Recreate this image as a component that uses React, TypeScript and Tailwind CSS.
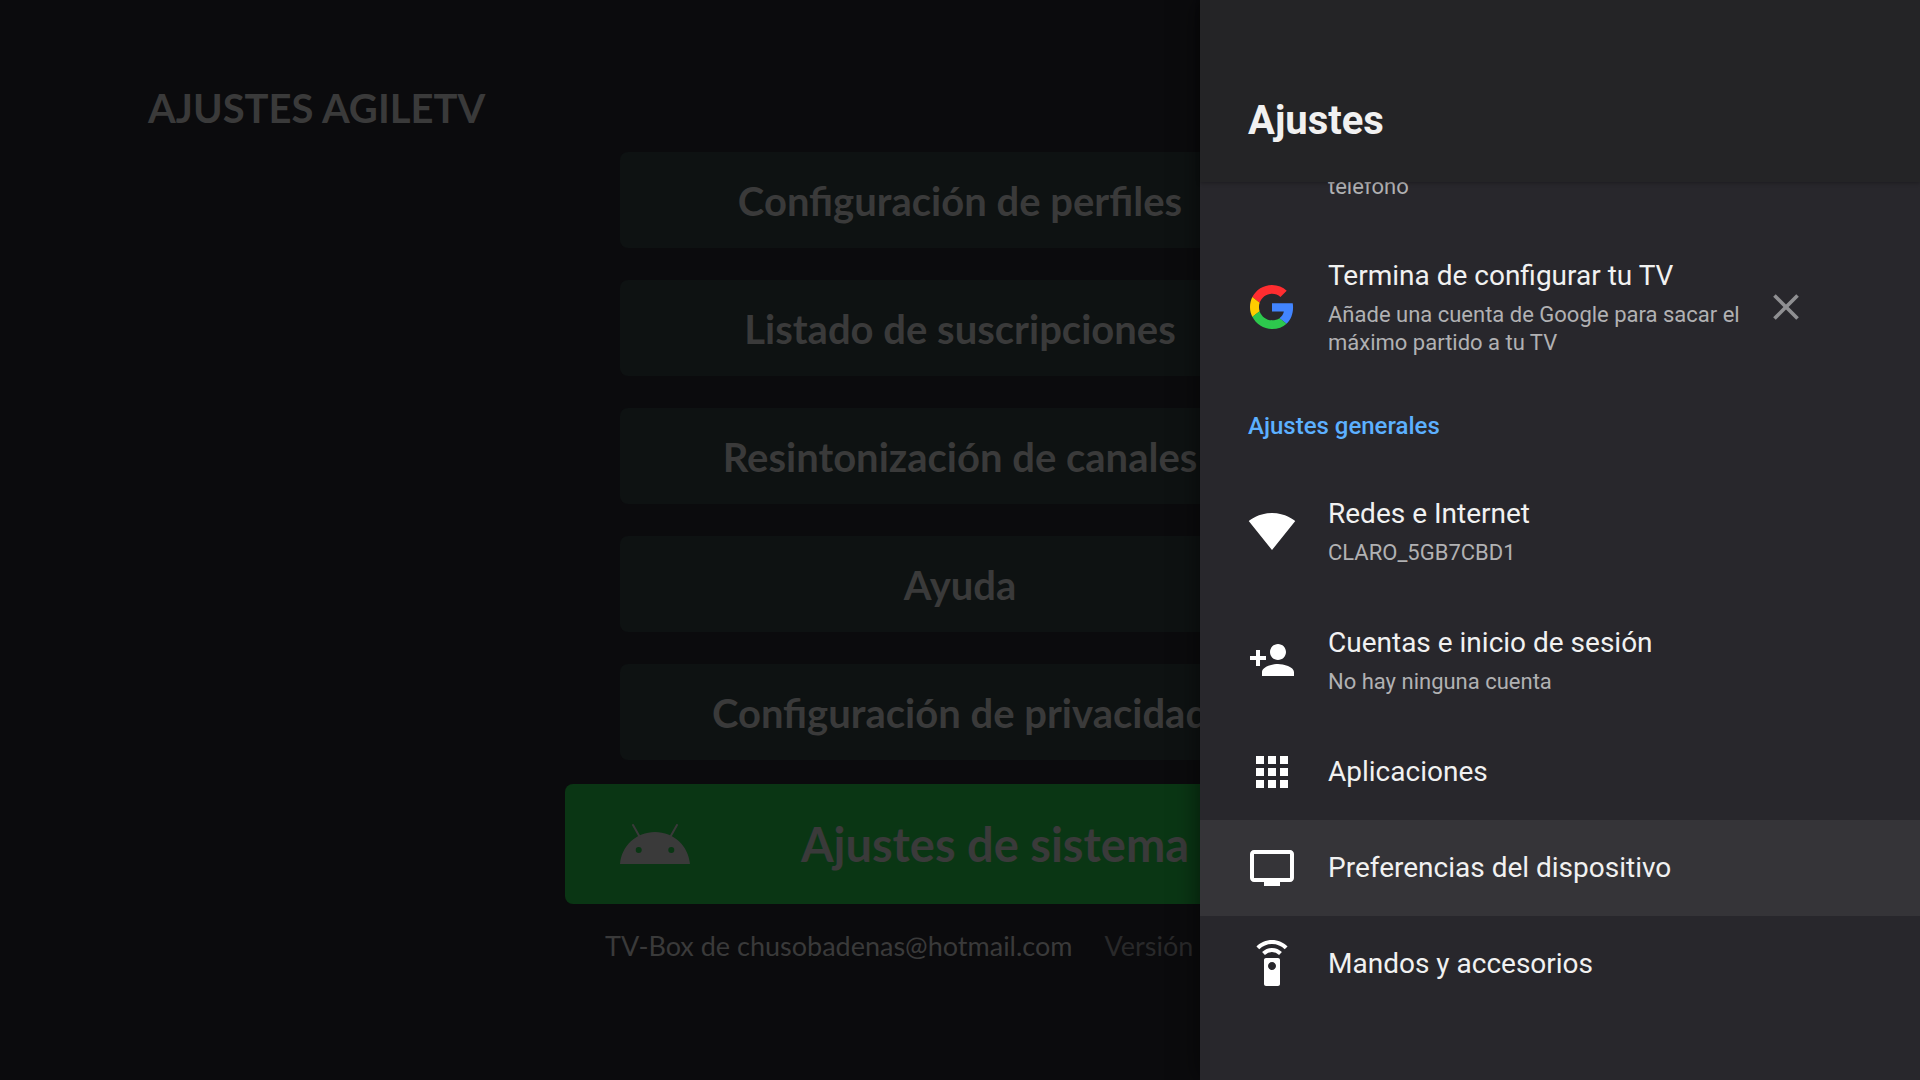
import React from "react";
import {
  MdApps,
  MdClose,
  MdPersonAdd,
  MdSettingsRemote,
  MdSignalWifi4Bar,
  MdTv,
} from "react-icons/md";

const menuOptions = [
  "Configuración de perfiles",
  "Listado de suscripciones",
  "Resintonización de canales",
  "Ayuda",
  "Configuración de privacidad",
];

const generalSettings = [
  { title: "Redes e Internet", detail: "CLARO_5GB7CBD1", icon: MdSignalWifi4Bar },
  { title: "Cuentas e inicio de sesión", detail: "No hay ninguna cuenta", icon: MdPersonAdd },
  { title: "Aplicaciones", icon: MdApps },
  { title: "Preferencias del dispositivo", icon: MdTv, selected: true },
  { title: "Mandos y accesorios", icon: MdSettingsRemote },
];

function AndroidHead() {
  return (
    <svg viewBox="0 0 70 40" className="h-10 w-[70px] shrink-0" fill="currentColor" aria-hidden="true">
      <path
        fillRule="evenodd"
        d="M0 40C1.600 22 16 8 35 8S68.400 22 70 40ZM18.700 23a3 3 0 1 0 0 6 3 3 0 0 0 0-6ZM51.300 23a3 3 0 1 0 0 6 3 3 0 0 0 0-6Z"
      />
      <path d="M13 1l6.500 11.500M57 1l-6.500 11.500" stroke="currentColor" strokeWidth="2" strokeLinecap="round" />
    </svg>
  );
}

function GoogleLogo() {
  return (
    <svg viewBox="0 0 48 48" className="size-11" aria-hidden="true">
      <path
        fill="#ff2d30"
        d="M24 9.500c3.540 0 6.710 1.220 9.210 3.600l6.850-6.850C35.900 2.380 30.470 0 24 0 14.620 0 6.510 5.380 2.560 13.220l7.980 6.190C12.430 13.720 17.740 9.500 24 9.500z"
      />
      <path
        fill="#4285ff"
        d="M46.980 24.550c0-1.570-.15-3.090-.38-4.550H24v9.020h12.940c-.58 2.960-2.260 5.480-4.780 7.180l7.730 6c4.510-4.180 7.090-10.360 7.090-17.650z"
      />
      <path
        fill="#ffcc00"
        d="M10.530 28.590c-.48-1.450-.76-2.990-.76-4.590s.27-3.140.76-4.590l-7.980-6.190C.92 16.460 0 20.120 0 24c0 3.880.92 7.540 2.560 10.780l7.970-6.190z"
      />
      <path
        fill="#2dc84d"
        d="M24 48c6.480 0 11.930-2.130 15.890-5.810l-7.730-6c-2.150 1.450-4.920 2.300-8.160 2.300-6.260 0-11.570-4.220-13.470-9.910l-7.980 6.190C6.510 42.620 14.620 48 24 48z"
      />
    </svg>
  );
}

export default function App() {
  return (
    <div className="relative min-h-screen overflow-hidden bg-[#0b0b0d]">
      <main className="flex flex-col pt-20 font-['Lato','Noto_Sans',sans-serif] text-[#3a3a3a]">
        <h1 className="px-37 text-[40px] leading-14 font-bold">AJUSTES AGILETV</h1>

        <div className="mt-4 flex flex-col items-center gap-8">
          {menuOptions.map((option) => (
            <button
              key={option}
              className="h-24 w-[680px] rounded-lg bg-[#0e1212] pt-0.5 text-[40px] font-bold"
            >
              {option}
            </button>
          ))}
        </div>

        <button className="mx-auto mt-6 flex h-30 w-[790px] items-center rounded-lg bg-[#0a3614] px-[55px] text-[47px] font-bold">
          <AndroidHead />
          <span className="flex-1">Ajustes de sistema</span>
        </button>

        <div className="mx-auto mt-6 flex w-[710px] gap-8 text-[27px] leading-9">
          <span>TV-Box de chusobadenas@hotmail.com</span>
          <span className="text-[#29292a]">Versión</span>
        </div>
      </main>

      {/* Side panel over the menu */}
      <aside className="absolute inset-y-0 right-0 w-[37.5%] bg-[#28272c] font-['Roboto',sans-serif] text-[#f1f1f1] shadow-[0_0_24px_rgba(0,0,0,0.6)]">
        <header className="relative flex h-[182px] items-end bg-[#242426] px-12 pb-[37px] shadow-[0_1px_4px_rgba(0,0,0,0.3)]">
          <h2 className="text-[40px] leading-12 font-bold">Ajustes</h2>
        </header>

        {/* Row scrolled under the header */}
        <div className="flex h-[46px] items-end overflow-hidden pb-[27px] pl-32">
          <p className="text-[22px] leading-7 text-[#b1b1b3]">teléfono</p>
        </div>

        <div className="flex items-center gap-8 py-7 pr-28 pl-12">
          <div className="flex w-12 shrink-0 justify-center">
            <GoogleLogo />
          </div>
          <div className="flex-1">
            <h3 className="text-[28px] leading-10">Termina de configurar tu TV</h3>
            <p className="mt-[5px] text-[22px] leading-7 text-[#b1b1b3]">
              Añade una cuenta de Google para sacar el máximo partido a tu TV
            </p>
          </div>
          <button aria-label="Cerrar" className="-ml-8 text-[#8f8f92]">
            <MdClose className="size-11" />
          </button>
        </div>

        <h3 className="px-12 pt-[25px] pb-[23px] text-2xl leading-[33px] font-medium text-[#5cb0ff]">
          Ajustes generales
        </h3>

        <ul>
          {generalSettings.map(({ title, detail, icon: Icon, selected }) => (
            <li key={title}>
              <button
                className={`flex w-full items-center gap-8 px-12 py-7 text-left ${selected ? "bg-[#353438]" : ""}`}
              >
                <Icon className="-my-1 size-12 shrink-0 text-white" />
                <span className="flex flex-col">
                  <span className="text-[28px] leading-10">{title}</span>
                  {detail && <span className="mt-[5px] text-[22px] leading-7 text-[#b1b1b3]">{detail}</span>}
                </span>
              </button>
            </li>
          ))}
        </ul>
      </aside>
    </div>
  );
}
